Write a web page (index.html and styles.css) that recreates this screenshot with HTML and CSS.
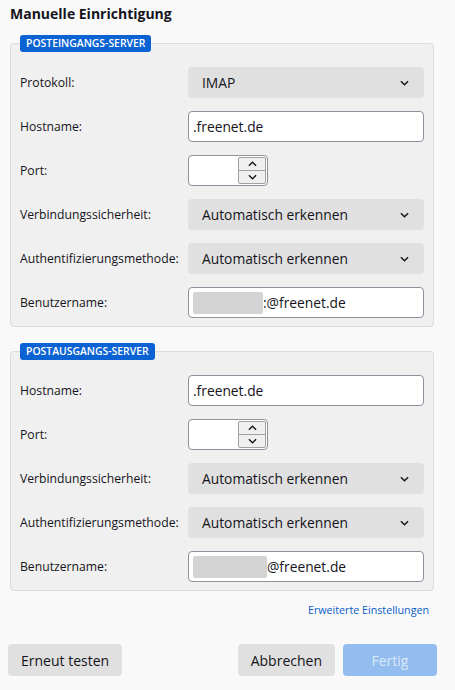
FILE: index.html
```html
<!DOCTYPE html>
<html lang="de">
<head>
<meta charset="utf-8">
<link rel="stylesheet" href="styles.css">
</head>
<body>
<div class="page">
  <h1 class="title">Manuelle Einrichtigung</h1>

  <fieldset class="group">
    <legend class="badge">POSTEINGANGS-SERVER</legend>
    <div class="rows">
      <div class="row"><span class="label">Protokoll:</span><div class="select"><span>IMAP</span><svg class="chev" viewBox="0 0 10 6"><path d="M1 1l4 4 4-4"/></svg></div></div>
      <div class="row"><span class="label">Hostname:</span><div class="input">.freenet.de</div></div>
      <div class="row"><span class="label">Port:</span><div class="port"><div class="spin"><span class="half"><svg viewBox="0 0 10 6"><path d="M1 5l4-4 4 4"/></svg></span><span class="half"><svg viewBox="0 0 10 6"><path d="M1 1l4 4 4-4"/></svg></span></div></div></div>
      <div class="row"><span class="label">Verbindungssicherheit:</span><div class="select"><span>Automatisch erkennen</span><svg class="chev" viewBox="0 0 10 6"><path d="M1 1l4 4 4-4"/></svg></div></div>
      <div class="row"><span class="label">Authentifizierungsmethode:</span><div class="select"><span>Automatisch erkennen</span><svg class="chev" viewBox="0 0 10 6"><path d="M1 1l4 4 4-4"/></svg></div></div>
      <div class="row"><span class="label">Benutzername:</span><div class="input user"><span class="blur"></span><span>:@freenet.de</span></div></div>
    </div>
  </fieldset>

  <fieldset class="group second">
    <legend class="badge">POSTAUSGANGS-SERVER</legend>
    <div class="rows">
      <div class="row"><span class="label">Hostname:</span><div class="input">.freenet.de</div></div>
      <div class="row"><span class="label">Port:</span><div class="port"><div class="spin"><span class="half"><svg viewBox="0 0 10 6"><path d="M1 5l4-4 4 4"/></svg></span><span class="half"><svg viewBox="0 0 10 6"><path d="M1 1l4 4 4-4"/></svg></span></div></div></div>
      <div class="row"><span class="label">Verbindungssicherheit:</span><div class="select"><span>Automatisch erkennen</span><svg class="chev" viewBox="0 0 10 6"><path d="M1 1l4 4 4-4"/></svg></div></div>
      <div class="row"><span class="label">Authentifizierungsmethode:</span><div class="select"><span>Automatisch erkennen</span><svg class="chev" viewBox="0 0 10 6"><path d="M1 1l4 4 4-4"/></svg></div></div>
      <div class="row"><span class="label">Benutzername:</span><div class="input user"><span class="blur wide"></span><span>@freenet.de</span></div></div>
    </div>
  </fieldset>

  <div class="linkrow"><a class="link">Erweiterte Einstellungen</a></div>

  <div class="buttons">
    <button class="btn">Erneut testen</button>
    <div class="right">
      <button class="btn">Abbrechen</button>
      <button class="btn primary">Fertig</button>
    </div>
  </div>
</div>
</body>
</html>
```

FILE: styles.css
```css
* { box-sizing: border-box; }
html, body { margin: 0; padding: 0; }
body {
  background: #f9f9fa;
  font-family: "Open Sans", "Noto Sans", sans-serif;
  color: #15141a;
  width: 455px;
  height: 690px;
  overflow: hidden;
}
.page { padding: 4px 21px 0 10px; }
.title {
  margin: 0;
  font-size: 14px;
  font-weight: 700;
  line-height: 20px;
  height: 31px;
}
.group {
  margin: 0;
  background: #f0f0f0;
  border: 1px solid #dcdcdc;
  border-radius: 4px;
  padding: 15px 9px 8px 9px;
  min-width: 0;
}
.group.second { margin-top: 16px; }
.badge {
  background: #0b63d3;
  color: #fff;
  font-size: 10.4px;
  font-weight: 600;
  line-height: 17px;
  height: 17px;
  padding: 0 6px;
  border-radius: 3px;
  margin-left: 0;
}
.rows { display: flex; flex-direction: column; gap: 13px; }
.row { display: flex; align-items: center; height: 31px; }
.label { width: 168px; flex: none; font-size: 12.2px; }
.select {
  flex: 1;
  height: 31px;
  background: #e0e0e0;
  border-radius: 4px;
  display: flex;
  align-items: center;
  justify-content: space-between;
  padding: 0 15px 0 14px;
  font-size: 13.8px;
}
.chev { width: 9px; height: 6px; fill: none; stroke: #15141a; stroke-width: 1.6; }
.input {
  flex: 1;
  height: 31px;
  background: #fff;
  border: 1px solid #8f8f9d;
  border-radius: 4px;
  display: flex;
  align-items: center;
  padding: 0 4px;
  font-size: 13.8px;
}
.user .blur {
  display: inline-block;
  width: 70px;
  height: 22px;
  background: #d4d4d4;
  border-radius: 2px;
}
.user .blur.wide { width: 74px; }
.port {
  width: 80px;
  height: 31px;
  background: #fff;
  border: 1px solid #8f8f9d;
  border-radius: 4px;
  display: flex;
  justify-content: flex-end;
  align-items: stretch;
  padding: 1px 1px 1px 0;
}
.spin {
  width: 28px;
  display: flex;
  flex-direction: column;
  border: 1px solid #a0a0a0;
  border-radius: 2px;
  background: #f0f0f0;
}
.half {
  flex: 1;
  display: flex;
  align-items: center;
  justify-content: center;
}
.half + .half { border-top: 1px solid #a0a0a0; }
.half svg { width: 9px; height: 6px; fill: none; stroke: #15141a; stroke-width: 1.5; }
.linkrow {
  display: flex;
  justify-content: flex-end;
  padding: 11px 5px 0 0;
  height: 53px;
}
.link {
  color: #0b5dc7;
  font-size: 10.7px;
  line-height: 16px;
}
.buttons {
  display: flex;
  justify-content: space-between;
  margin-left: -2px;
  margin-right: -3px;
}
.right { display: flex; gap: 8px; }
.btn {
  font-family: inherit;
  font-size: 14px;
  color: #15141a;
  background: #e0e0e0;
  border: none;
  border-radius: 4px;
  height: 32px;
  padding: 0 13px;
}
.btn.primary {
  background: #93bdee;
  color: #dbe8f8;
  width: 94px;
}
```
